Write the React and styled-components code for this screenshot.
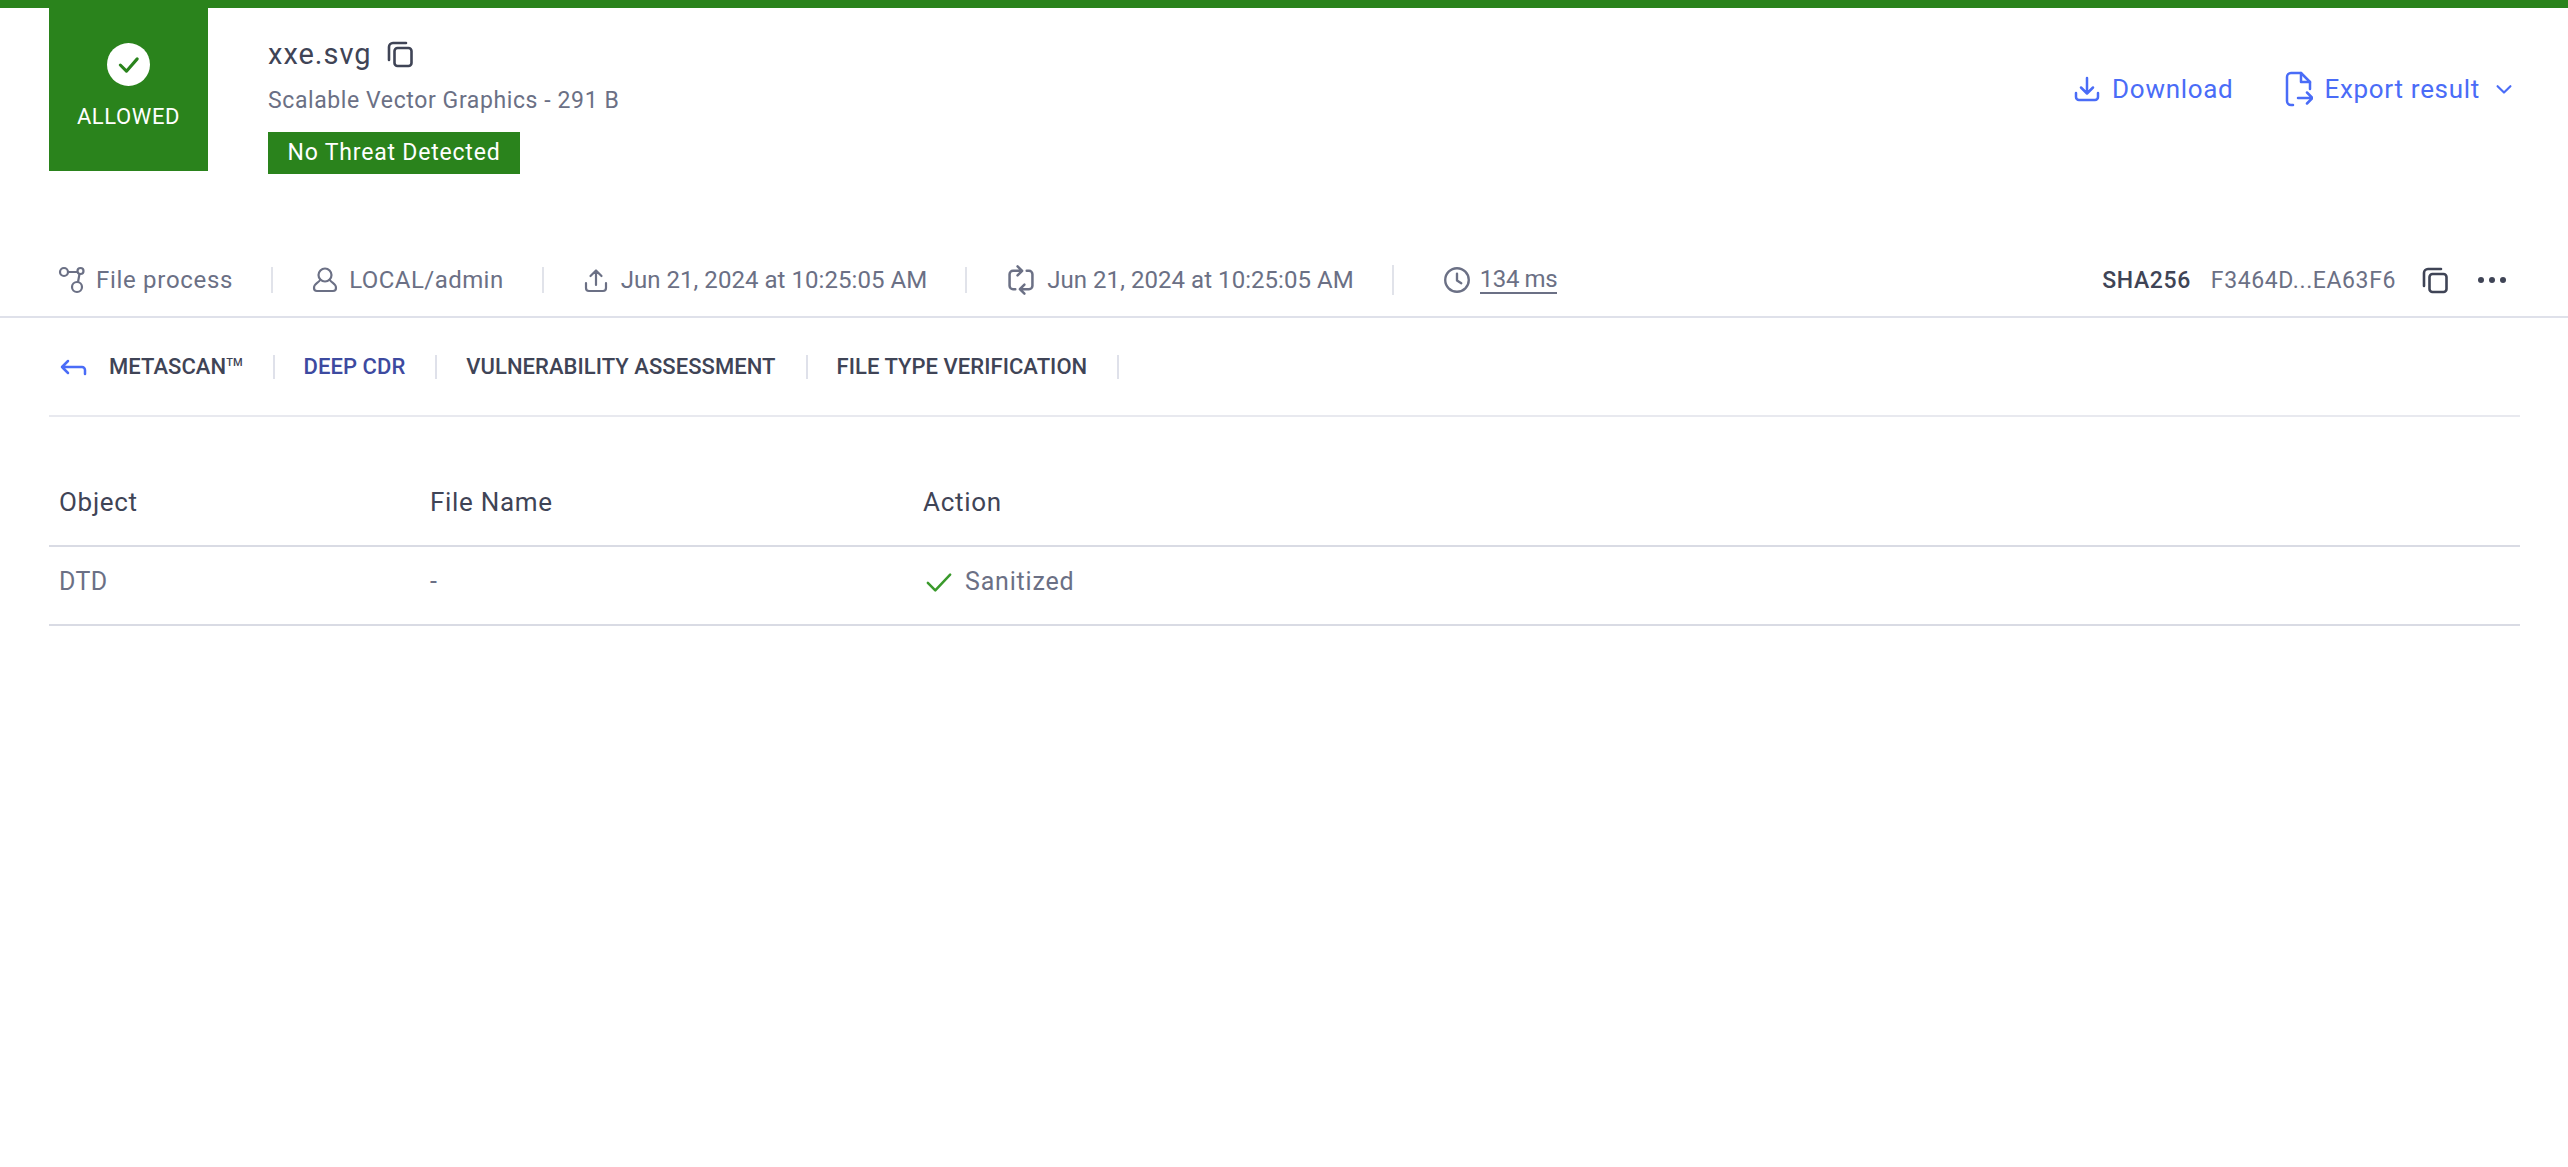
import React from 'react';
import styled, { createGlobalStyle } from 'styled-components';

const GREEN = '#2a831c';
const BLUE = '#4a6cf7';
const SLATE = '#6b7085';
const DARK = '#3f4456';

const Global = createGlobalStyle`
  html, body { margin: 0; padding: 0; background: #fff; }
  body { font-family: Roboto, "Liberation Sans", sans-serif; }
`;

const Page = styled.div`
  width: 2568px;
  height: 1167px;
  border-top: 8px solid ${GREEN};
  box-sizing: border-box;
  overflow: hidden;
`;

const Header = styled.header`
  display: flex;
  align-items: flex-start;
  height: 236px;
  padding: 0 54px 0 49px;
  box-sizing: border-box;
`;

const Verdict = styled.div`
  width: 159px;
  height: 163px;
  background: ${GREEN};
  color: #fff;
  display: flex;
  flex-direction: column;
  align-items: center;
  padding-top: 35px;
  box-sizing: border-box;
  gap: 17px;
`;

const VerdictLabel = styled.span`
  font-size: 22px;
  letter-spacing: 0.6px;
  line-height: 28px;
`;

const FileInfo = styled.div`
  margin-left: 60px;
  padding-top: 30px;
  display: flex;
  flex-direction: column;
  align-items: flex-start;
`;

const FileName = styled.div`
  display: flex;
  align-items: center;
  gap: 14px;
  font-size: 29px;
  line-height: 32px;
  color: ${DARK};
  letter-spacing: 1px;
`;

const FileType = styled.div`
  margin-top: 17px;
  font-size: 23px;
  line-height: 28px;
  color: ${SLATE};
  letter-spacing: 0.6px;
`;

const Badge = styled.div`
  margin-top: 17px;
  width: 252px;
  height: 42px;
  background: ${GREEN};
  color: #fff;
  font-size: 23px;
  letter-spacing: 0.8px;
  line-height: 42px;
  text-align: center;
`;

const Actions = styled.div`
  margin-left: auto;
  padding-top: 63px;
  display: flex;
  align-items: center;
  gap: 52px;
`;

const ActionLink = styled.a`
  display: flex;
  align-items: center;
  gap: 11px;
  color: ${BLUE};
  font-size: 26px;
  letter-spacing: 0.7px;
  line-height: 32px;
`;

const Chevron = styled.span`
  display: flex;
  margin-left: 3px;
`;

const MetaBar = styled.div`
  height: 74px;
  display: flex;
  align-items: center;
  padding: 0 62px 0 58px;
  border-bottom: 2px solid #dfe1ea;
  box-sizing: border-box;
`;

const MetaItem = styled.div`
  display: flex;
  align-items: center;
  gap: ${(p) => p.$gap || 10}px;
  font-size: 24px;
  letter-spacing: ${(p) => p.$ls ?? 0.3}px;
  color: ${SLATE};
  padding-right: 40px;
  margin-right: 38px;
  margin-left: ${(p) => (p.$last ? 10 : 0)}px;
  position: relative;
  &::after {
    content: '';
    display: ${(p) => (p.$last ? 'none' : 'block')};
    position: absolute;
    right: 0;
    top: 1px;
    bottom: 1px;
    width: 2px;
    background: #e1e3ea;
  }
`;

const Underlined = styled.span`
  border-bottom: 2px solid ${SLATE};
  line-height: 26px;
`;

const Hash = styled.div`
  margin-left: auto;
  display: flex;
  align-items: center;
  font-size: 23px;
  letter-spacing: 0.6px;
  color: ${SLATE};
`;

const HashLabel = styled.span`
  color: ${DARK};
  margin-right: 20px;
  letter-spacing: 0.6px;
  font-weight: 500;
`;

const CopyWrap = styled.div`
  display: flex;
  margin: 0 29px 0 25px;
`;

const Dots = styled.div`
  display: flex;
  gap: 5px;
`;

const Dot = styled.i`
  width: 6px;
  height: 6px;
  border-radius: 50%;
  background: ${DARK};
`;

const Tabs = styled.nav`
  margin: 0 48px 0 49px;
  height: 99px;
  padding: 0 0 0 11px;
  display: flex;
  align-items: center;
  border-bottom: 2px solid #e8e9ef;
  box-sizing: border-box;
`;

const Tab = styled.div`
  display: flex;
  align-items: center;
  height: 24px;
  font-size: 22px;
  font-weight: 500;
  letter-spacing: 0.05px;
  color: ${(p) => (p.$active ? '#3d4aa0' : DARK)};
  padding: 0 30px 0 ${(p) => (p.$first ? 0 : 29)}px;
  border-right: 2px solid #dfe1ea;
`;

const BackArrow = styled.div`
  display: flex;
  align-items: center;
  margin-right: 21px;
`;

const Tm = styled.span`
  font-size: 11px;
  align-self: flex-start;
  line-height: 16px;
`;

const Table = styled.div`
  margin: 29px 48px 0 49px;
`;

const Row = styled.div`
  display: grid;
  grid-template-columns: 371px 493px 1fr;
  align-items: center;
  height: ${(p) => p.$h}px;
  padding: ${(p) => (p.$head ? '12px 0 0 10px' : '0 0 8px 10px')};
  border-bottom: 2px solid #d9dbe4;
  box-sizing: border-box;
  font-size: ${(p) => (p.$head ? 26 : 25)}px;
  letter-spacing: ${(p) => (p.$head ? 0.7 : 0.4)}px;
  color: ${(p) => (p.$head ? DARK : SLATE)};
`;

const Status = styled.div`
  display: flex;
  align-items: center;
  gap: 13px;
  padding-left: 3px;
  letter-spacing: 0.8px;
`;

const Svg = styled.svg`
  display: block;
  flex: none;
  fill: none;
  stroke: ${(p) => p.$c || SLATE};
  stroke-width: ${(p) => p.$w || 2.2};
  stroke-linecap: round;
  stroke-linejoin: round;
`;

const Icon = ({ size = 28, c, w, children }) => (
  <Svg width={size} height={size} viewBox="0 0 28 28" $c={c} $w={w}>
    {children}
  </Svg>
);

const Copy = ({ c = DARK }) => (
  <Icon c={c} w={2.6}>
    <rect x="8.5" y="8" width="17" height="18" rx="3" />
    <path d="M20 3H7a4 4 0 0 0-4 4v13" />
  </Icon>
);

export default function App() {
  return (
    <Page>
      <Global />
      <Header>
        <Verdict>
          <svg width="43" height="43" viewBox="0 0 42 42">
            <circle cx="21" cy="21" r="21" fill="#fff" />
            <path d="M13 21.5l6 6 10.5-12" fill="none" stroke={GREEN} strokeWidth="3" strokeLinecap="round" strokeLinejoin="round" />
          </svg>
          <VerdictLabel>ALLOWED</VerdictLabel>
        </Verdict>
        <FileInfo>
          <FileName>
            xxe.svg
            <Copy />
          </FileName>
          <FileType>Scalable Vector Graphics - 291 B</FileType>
          <Badge>No Threat Detected</Badge>
        </FileInfo>
        <Actions>
          <ActionLink>
            <Icon c={BLUE} w={2.5}>
              <path d="M14 3v15M8 12.5l6 6 6-6M3 18v4a3 3 0 0 0 3 3h16a3 3 0 0 0 3-3v-4" />
            </Icon>
            Download
          </ActionLink>
          <ActionLink>
            <Svg width="28" height="36" viewBox="0 0 28 36" $c={BLUE} $w={2.5}>
              <path d="M8 34H6a4 4 0 0 1-4-4V6a4 4 0 0 1 4-4h10l9 9v7" />
              <path d="M16 2v9h9M13 27h14M22 21.5l5.5 5.5-5.5 5.5" />
            </Svg>
            Export result
            <Chevron>
              <Icon size={20} c={BLUE} w={3}>
                <path d="M5 10l9 9 9-9" />
              </Icon>
            </Chevron>
          </ActionLink>
        </Actions>
      </Header>
      <MetaBar>
        <MetaItem $ls={0.7}>
          <Icon>
            <circle cx="6" cy="6" r="4" />
            <circle cx="22.5" cy="5" r="3" />
            <circle cx="19" cy="21" r="5" />
            <path d="M10 6h9M21.5 8l-1.5 8" />
          </Icon>
          File process
        </MetaItem>
        <MetaItem $ls={0.45}>
          <Icon>
            <circle cx="14" cy="9" r="6.5" />
            <path d="M9 14c-1 3-6 3-6 8 0 2 1 3 3 3h16c2 0 3-1 3-3 0-5-5-5-6-8" />
          </Icon>
          LOCAL/admin
        </MetaItem>
        <MetaItem $ls={0.05} $gap={11}>
          <Icon>
            <path d="M14 19V5M8.5 10L14 4.5l5.5 5.5M4 17v5a3 3 0 0 0 3 3h14a3 3 0 0 0 3-3v-5" />
          </Icon>
          Jun 21, 2024 at 10:25:05 AM
        </MetaItem>
        <MetaItem $ls={0.05}>
          <Icon size={32}>
            <path d="M9 22H7a3 3 0 0 1-3-3V9a3 3 0 0 1 3-3h7M11 2l4 4-4 4" />
            <path d="M19 6h2a3 3 0 0 1 3 3v10a3 3 0 0 1-3 3h-7M17 18l-4 4 4 4" />
          </Icon>
          Jun 21, 2024 at 10:25:05 AM
        </MetaItem>
        <MetaItem $last $gap={8} $ls={-0.4}>
          <Icon size={30}>
            <circle cx="14" cy="14" r="11" />
            <path d="M14 8v6.5l4 2.5" />
          </Icon>
          <Underlined>134 ms</Underlined>
        </MetaItem>
        <Hash>
          <HashLabel>SHA256</HashLabel>
          F3464D...EA63F6
          <CopyWrap>
            <Copy />
          </CopyWrap>
          <Dots>
            <Dot />
            <Dot />
            <Dot />
          </Dots>
        </Hash>
      </MetaBar>
      <Tabs>
        <BackArrow>
          <Icon c={BLUE} w={2.5}>
            <path d="M8 8l-6 6 6 6M2 14h20a3 3 0 0 1 3 3v4" />
          </Icon>
        </BackArrow>
        <Tab $first>
          METASCAN<Tm>TM</Tm>
        </Tab>
        <Tab $active>DEEP CDR</Tab>
        <Tab>VULNERABILITY ASSESSMENT</Tab>
        <Tab>FILE TYPE VERIFICATION</Tab>
      </Tabs>
      <Table>
        <Row $head $h={101}>
          <span>Object</span>
          <span>File Name</span>
          <span>Action</span>
        </Row>
        <Row $h={79}>
          <span>DTD</span>
          <span>-</span>
          <Status>
            <Icon size={26} c="#3a9a2c" w={2.7}>
              <path d="M2 15l8 8L26 6" />
            </Icon>
            Sanitized
          </Status>
        </Row>
      </Table>
    </Page>
  );
}
